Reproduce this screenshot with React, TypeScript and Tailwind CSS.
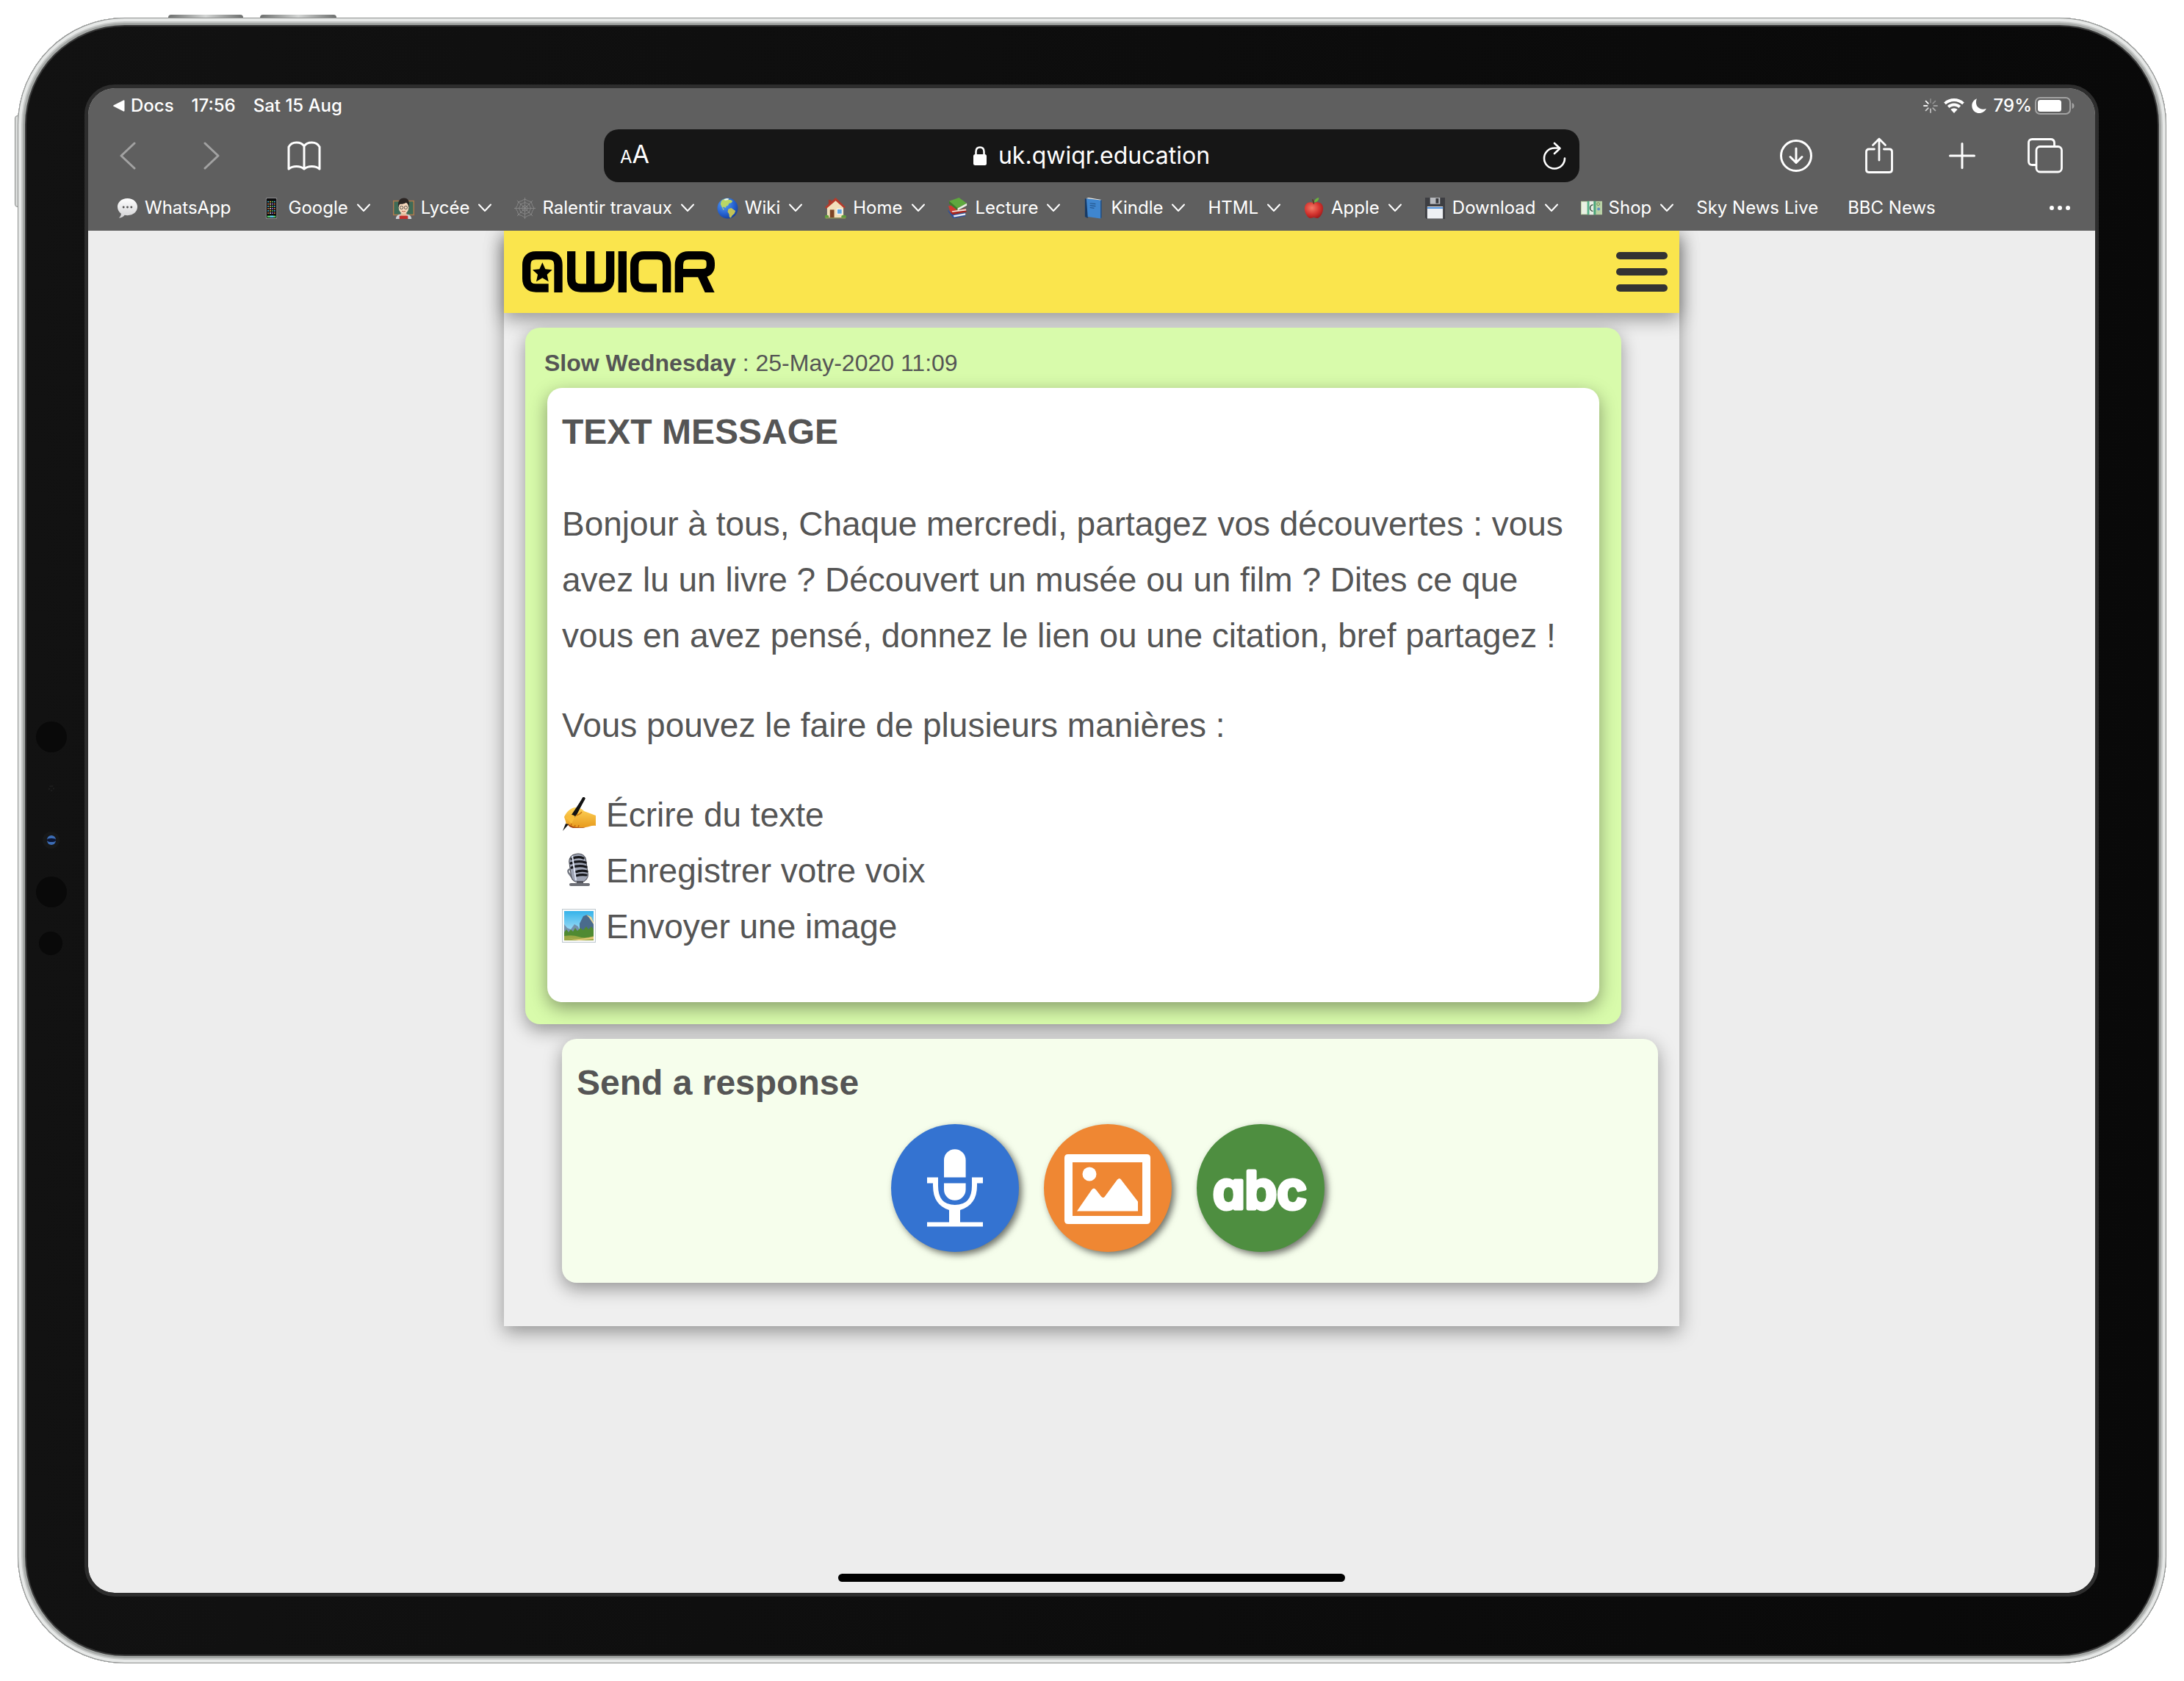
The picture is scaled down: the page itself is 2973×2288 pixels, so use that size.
import type { ReactNode } from "react";

type IconProps = { className?: string };

/* ---------- small pictures used in the bookmarks bar ---------- */

function SpeechPic() {
  return (
    <svg viewBox="0 0 30 30" className="size-[29px] shrink-0" aria-hidden="true">
      <defs>
        <linearGradient id="speech" x1="0" y1="0" x2="0" y2="1">
          <stop offset="0" stopColor="#ffffff" />
          <stop offset="1" stopColor="#d2d2d4" />
        </linearGradient>
      </defs>
      <path d="M15 1C6.500 1 1 6.500 1 13c0 4 2 7.500 5 9.600 0 2.400-1 4.400-3 6 3.500-.2 6.500-1.800 8-4 1.300.3 2.600.4 4 .4 8.500 0 14-5.500 14-12S23.500 1 15 1z" fill="url(#speech)" />
      <circle cx="9.500" cy="13.500" r="1.500" fill="#555" />
      <circle cx="15" cy="13.500" r="1.500" fill="#555" />
      <circle cx="20.500" cy="13.500" r="1.500" fill="#555" />
    </svg>
  );
}

function PhonePic() {
  const colours = ["#4fd0f0", "#b070f0", "#ffd84a", "#f08a4a", "#62d86a", "#f4f4f4"];
  return (
    <svg viewBox="0 0 30 30" className="size-[29px] shrink-0" aria-hidden="true">
      <rect x="7" y="0" width="16" height="30" rx="2" fill="#8e8e90" />
      <rect x="8" y="1" width="14" height="28" rx="1.500" fill="#0c0c0e" />
      {[0, 1, 2, 3, 4, 5].map((row) =>
        [0, 1, 2, 3].map((col) => (
          <rect key={`${row}-${col}`} x={9.5 + col * 3} y={5 + row * 3.2} width="1.800" height="1.600" fill={colours[(row * 3 + col * 2) % 6]} />
        )),
      )}
      <rect x="9" y="25.500" width="12" height="2.500" fill="#5ad36b" />
      <rect x="13" y="25.500" width="5" height="2.500" fill="#5ec6f2" />
    </svg>
  );
}

function TeacherPic() {
  return (
    <svg viewBox="0 0 30 30" className="size-[29px] shrink-0" aria-hidden="true">
      <rect x="0" y="4" width="30" height="21" fill="#b07a4c" />
      <rect x="1.500" y="5.500" width="27" height="18" fill="#3f6b57" />
      <path d="M4 30c0-5 4-7 11-7s11 2 11 7z" fill="#cfd3d8" />
      <path d="M11 21h8v5h-8z" fill="#e6bd9c" />
      <ellipse cx="15" cy="14" rx="7" ry="8.500" fill="#f6d8bd" />
      <path d="M7.500 14C6 5 10 .5 15.500.5S24 5 22.500 14c-.6-4-2-6-4-7-2.500 1.800-6 2.200-8.500 2-1.500 1-2.200 2.800-2.500 5z" fill="#2b2523" />
      <circle cx="12" cy="14" r="2.200" fill="none" stroke="#333" strokeWidth=".8" />
      <circle cx="18" cy="14" r="2.200" fill="none" stroke="#333" strokeWidth=".8" />
      <path d="M12.500 19q2.500 1.500 5 0" stroke="#b5533e" strokeWidth="1" fill="none" />
      <rect x="9" y="25.500" width="12" height="4.500" fill="#c22f2c" />
    </svg>
  );
}

function WebPic() {
  return (
    <svg viewBox="0 0 30 30" className="size-[29px] shrink-0" fill="none" stroke="#8b8b8b" strokeWidth=".9" aria-hidden="true">
      <path d="M15 0v30M0 15h30M4 4l22 22M26 4L4 26" />
      <path d="M15 2q4 3 9 4 1 5 4 9-3 4-4 9-5 1-9 4-4-3-9-4-1-5-4-9 3-4 4-9 5-1 9-4z" />
      <path d="M15 6.500q3 2 6 2.500.500 3.500 2.500 6-2 2.500-2.500 6-3.500.5-6 2.500-2.500-2-6-2.500-.5-3.500-2.500-6 2-2.500 2.500-6 3.500-.5 6-2.500z" />
      <path d="M15 11q1.500 1 3 1 .2 1.500 1 3-.8 1.500-1 3-1.500.2-3 1-1.500-.8-3-1-.2-1.500-1-3 .8-1.500 1-3 1.500 0 3-1z" />
    </svg>
  );
}

function GlobePic() {
  return (
    <svg viewBox="0 0 30 30" className="size-[29px] shrink-0" aria-hidden="true">
      <defs>
        <radialGradient id="globe" cx=".35" cy=".3" r=".8">
          <stop offset="0" stopColor="#5aa2f5" />
          <stop offset=".6" stopColor="#2460cf" />
          <stop offset="1" stopColor="#143a8e" />
        </radialGradient>
      </defs>
      <circle cx="15" cy="15" r="14.500" fill="url(#globe)" />
      <path d="M6 5C8 2.500 12 .8 15 1l2 2 2 0 3 2-2 2.500-3 .5-1.500 3-2.500 1-1 2.500-2.500-1.500-1.500 1 2 2.500-1 1L6.500 12.500 5 9z" fill="#b9d765" />
      <path d="M16 16l4-1.500 3 2 3 2-1.500 4-3 2.500-2 3.500-2-1-.5-4.500-2-3z" fill="#c3c356" />
      <path d="M10 2.300l4-1.200 3 .400-2 1.800-4 .700z" fill="#eef6ff" />
    </svg>
  );
}

function HousePic() {
  return (
    <svg viewBox="0 0 30 30" className="size-[29px] shrink-0" aria-hidden="true">
      <rect x="5" y="3" width="4" height="8" fill="#a33a2c" />
      <path d="M3 13L15 2l11 11v15H3z" fill="#f2e0bb" />
      <path d="M0 13.500L15 0l14 13.500-2 1.500L15 4.500 2 15.500z" fill="#b63a2b" />
      <rect x="7" y="17" width="6" height="11.500" fill="#7d4526" />
      <rect x="17" y="16" width="7" height="7" fill="#5fa6e0" stroke="#fff" strokeWidth="1" />
      <ellipse cx="2.500" cy="27" rx="3" ry="2.500" fill="#5d9e3a" />
      <ellipse cx="26.500" cy="27" rx="3.500" ry="2.500" fill="#5d9e3a" />
      <rect x="1" y="28" width="28" height="1.500" fill="#8d8f5a" />
    </svg>
  );
}

function BooksPic() {
  return (
    <svg viewBox="0 0 30 30" className="size-[29px] shrink-0" aria-hidden="true">
      <path d="M2 5l14-5 11 8-13 7z" fill="#5fa83e" />
      <path d="M2 5l12 10v3L2 8.500z" fill="#3d7c28" />
      <path d="M14 15l13-7v3l-13 7z" fill="#eef0e4" />
      <path d="M1 12l4-1 9 7 11-3v4l-20 4z" fill="#cf3a31" />
      <path d="M6 19l20-3v2.500L7 22z" fill="#f3e9dd" />
      <path d="M3 21l23-3 1 2-20 4z" fill="#a9261f" />
      <path d="M0 17l7 7 18-3v5L8 29 1 20z" fill="#2d4f9c" />
      <path d="M8 25l17-3v2.500L9 27.500z" fill="#e9edf5" />
    </svg>
  );
}

function BookPic() {
  return (
    <svg viewBox="0 0 30 30" className="size-[29px] shrink-0" aria-hidden="true">
      <path d="M3 1l4 2v26l-4-2z" fill="#173a66" />
      <path d="M5 1l20 2.500v26L7 27z" fill="#3f86cf" />
      <path d="M5 1l20 2.500 1.500-.5L8 0z" fill="#f1f1ee" />
      <path d="M25 3.500l1.500-.5v25l-1.500 1.500z" fill="#1f4d85" />
      <path d="M10 8l8 1M10 11l8 1M10 14l6 .8" stroke="#24578f" strokeWidth="1.200" />
    </svg>
  );
}

function ApplePic() {
  return (
    <svg viewBox="0 0 30 30" className="size-[29px] shrink-0" aria-hidden="true">
      <defs>
        <radialGradient id="apple" cx=".4" cy=".35" r=".7">
          <stop offset="0" stopColor="#f57a66" />
          <stop offset=".6" stopColor="#d3332e" />
          <stop offset="1" stopColor="#9c1a1a" />
        </radialGradient>
      </defs>
      <path d="M15 8c3-2.500 12-2.500 13 6 .6 7-4 15-8.500 15-2 0-3-1-4.500-1s-2.500 1-4.500 1C6 29 1.400 21 2 14c1-8.500 10-8.500 13-6z" fill="url(#apple)" />
      <path d="M15 9c-.3-3-.8-4.500-2-6.500" stroke="#5a3a1c" strokeWidth="1.500" fill="none" />
      <path d="M15.500 6.500C15.500 3 18.500.5 22 0c0 4-2.500 6.500-6.500 6.500z" fill="#6cb33f" />
    </svg>
  );
}

function FloppyPic() {
  return (
    <svg viewBox="0 0 30 30" className="size-[29px] shrink-0" aria-hidden="true">
      <path d="M1 0h28v30H3l-2-2z" fill="#3d3e42" />
      <rect x="8" y="0" width="14" height="9" fill="#b9bbbf" />
      <rect x="16" y="1" width="4" height="7" fill="#3a3b3e" />
      <rect x="4" y="12.500" width="22" height="17" fill="#eef0f3" />
      <rect x="4" y="13.500" width="22" height="2" fill="#4b8fdc" />
    </svg>
  );
}

function CashPic() {
  return (
    <svg viewBox="0 0 30 30" className="size-[29px] shrink-0" aria-hidden="true">
      <rect x="0" y="5" width="30" height="19" fill="#b9d2a6" />
      <rect x="1" y="6" width="8" height="17" fill="#eaf1e4" />
      <rect x="9" y="5" width="3" height="19" fill="#59b48c" />
      <rect x="12" y="5" width="6" height="19" fill="#e9efe7" />
      <rect x="18" y="5" width="3" height="19" fill="#4aa57c" />
      <path d="M17 10a4 4.500 0 1 0 0 9" stroke="#2c4a3c" strokeWidth="1.500" fill="none" />
      <circle cx="24.500" cy="9" r="2" fill="none" stroke="#6b8c54" strokeWidth="1" />
      <circle cx="25" cy="16" r="2" fill="#5d8fc4" />
    </svg>
  );
}

/* ---------- pictures inside the message ---------- */

function WritingPic() {
  return (
    <svg viewBox="0 0 46 46" className="mr-3.5 inline-block size-[46px] align-[-6px]" aria-hidden="true">
      <defs>
        <linearGradient id="hand" x1="0" y1="0" x2="0" y2="1">
          <stop offset="0" stopColor="#ffd45a" />
          <stop offset="1" stopColor="#e79a1c" />
        </linearGradient>
      </defs>
      <path d="M3 27C6 19 14 13 20 14c5 1 7 2 10 5l16 6v14c-6-1-9 2-14 2-5 1-12 1-19-1-5-2-8-3-8-7z" fill="url(#hand)" />
      <path d="M8 36c6 5 15 6 24 5l-3 1H15c-4-1-7-3-7-6z" fill="#a8480f" />
      <path d="M12 39l1-3M17 41l1-3M22 41l1-3" stroke="#c9690f" strokeWidth="1.500" />
      <path d="M28 1.500q2-2.500 3.500 0L20 24l-3 1-4-1z" fill="#131313" />
      <path d="M29.500 2L16 26" stroke="#131313" strokeWidth="4" strokeLinecap="round" />
      <path d="M5 36l4 1-8 9z" fill="#131313" />
      <path d="M5 28q7-7 13-2l-5 10z" fill="#f9bd3a" />
      <path d="M19 25q5-1 8-5" stroke="#c97a12" strokeWidth="1.500" fill="none" />
    </svg>
  );
}

function StudioMicPic() {
  return (
    <svg viewBox="0 0 46 46" className="mr-3.5 inline-block size-[46px] align-[-6px]" aria-hidden="true">
      <path d="M11 22q-4 1-2 5l6 8" stroke="#777b85" strokeWidth="2.500" fill="none" />
      <rect x="11" y="1" width="23" height="39" rx="10" transform="rotate(-8 23 20)" fill="#9fa5b5" stroke="#4b4d55" strokeWidth="1" />
      <path d="M13 8q9-4 16-1M12 14q10-4 20-1M13 20q10-4 20-1M18 26q8-3 16-1M19 31q7-2 14-1" stroke="#15161a" strokeWidth="3.200" fill="none" strokeLinecap="round" />
      <path d="M14 4l5 33" stroke="#dfe5f5" strokeWidth="2" />
      <path d="M20 38h9v4h-9z" fill="#55575f" />
      <rect x="10" y="41" width="28" height="4" rx="2" fill="#6d6f76" />
    </svg>
  );
}

function FramedPic() {
  return (
    <svg viewBox="0 0 46 46" className="mr-3.5 inline-block size-[46px] align-[-6px]" aria-hidden="true">
      <defs>
        <linearGradient id="sky" x1="0" y1="0" x2="0" y2="1">
          <stop offset="0" stopColor="#35b3ea" />
          <stop offset="1" stopColor="#d3f1fb" />
        </linearGradient>
      </defs>
      <rect x=".5" y=".5" width="45" height="45" fill="#fbfbfb" stroke="#bfc9d0" />
      <rect x="3" y="3" width="40" height="40" fill="url(#sky)" />
      <path d="M24 33V20l5-10 5-2 6 3 3 7v16z" fill="#4a6b8c" />
      <path d="M33 8l7 3 3 7v3l-6-9z" fill="#e6d9a0" />
      <path d="M3 21l4 5 5 2 5-7 5 3 4 10H3z" fill="#7391ab" />
      <path d="M3 32l3-4 3 4 3-4 3 3 3-5 3 4 4-4 4 3 4-5 3 4 4-4 3 4v12H3z" fill="#4f8a32" />
      <path d="M3 37q12-2 20 1t20-1v6H3z" fill="#9aa845" />
      <path d="M8 40q12 3 35-2v3l-20 2z" fill="#e3c978" />
    </svg>
  );
}

/* ---------- line icons ---------- */

function Chevron({ className }: IconProps) {
  return (
    <svg viewBox="0 0 18 12" className={className} fill="none" stroke="currentColor" strokeWidth="2" strokeLinecap="round" strokeLinejoin="round" aria-hidden="true">
      <path d="M1 1.500l8 8.500 8-8.500" />
    </svg>
  );
}

type Bookmark = { label: string; pic?: ReactNode; folder?: boolean };

const bookmarks: Bookmark[] = [
  { label: "WhatsApp", pic: <SpeechPic /> },
  { label: "Google", pic: <PhonePic />, folder: true },
  { label: "Lycée", pic: <TeacherPic />, folder: true },
  { label: "Ralentir travaux", pic: <WebPic />, folder: true },
  { label: "Wiki", pic: <GlobePic />, folder: true },
  { label: "Home", pic: <HousePic />, folder: true },
  { label: "Lecture", pic: <BooksPic />, folder: true },
  { label: "Kindle", pic: <BookPic />, folder: true },
  { label: "HTML", folder: true },
  { label: "Apple", pic: <ApplePic />, folder: true },
  { label: "Download", pic: <FloppyPic />, folder: true },
  { label: "Shop", pic: <CashPic />, folder: true },
  { label: "Sky News Live" },
  { label: "BBC News" },
];

function StatusBar() {
  return (
    <div className="flex h-12 items-center justify-between pr-7 pl-[34px] text-[24px] leading-6 font-medium">
      <div className="flex items-center gap-6">
        <button type="button" className="flex items-center gap-2">
          <svg viewBox="0 0 16 16" className="size-4" fill="currentColor" aria-hidden="true">
            <path d="M.7 7.200L14 .4q1.500-.6 1.500 1v13.200q0 1.600-1.500 1L.7 8.800q-1.200-.8 0-1.600z" />
          </svg>
          Docs
        </button>
        <span>17:56</span>
        <span>Sat 15 Aug</span>
      </div>
      <div className="flex items-center">
        <svg viewBox="0 0 20 20" className="mr-2 size-5" stroke="#fff" strokeWidth="1.800" strokeLinecap="round" aria-hidden="true">
          <path d="M10 1v4.500" opacity=".25" />
          <path d="M16.400 3.600l-3.200 3.200" opacity=".3" />
          <path d="M19 10h-4.500" opacity=".4" />
          <path d="M16.400 16.400l-3.200-3.200" opacity=".5" />
          <path d="M10 19v-4.500" opacity=".6" />
          <path d="M3.600 16.400l3.200-3.200" opacity=".7" />
          <path d="M1 10h4.500" opacity=".9" />
          <path d="M3.600 3.600l3.200 3.200" />
        </svg>
        <svg viewBox="0 0 28 20" className="mr-2.5 h-5 w-7" fill="#fff" aria-hidden="true">
          <path d="M14 0C8.700 0 3.800 2 .2 5.400l2.600 2.900C5.800 5.500 9.700 3.900 14 3.900s8.200 1.600 11.200 4.400l2.600-2.900C24.200 2 19.300 0 14 0z" />
          <path d="M14 6.600c-3.500 0-6.700 1.300-9.100 3.500l2.600 2.900c1.700-1.600 4-2.500 6.500-2.500s4.800.9 6.500 2.500l2.600-2.900c-2.400-2.200-5.600-3.500-9.100-3.500z" />
          <path d="M14 13.200c-1.800 0-3.400.7-4.600 1.800L14 20l4.600-5c-1.200-1.100-2.800-1.800-4.600-1.800z" />
        </svg>
        <svg viewBox="0 0 20 20" className="mr-2.5 size-5" fill="#fff" aria-hidden="true">
          <path d="M7 .2C5 5 6 9.500 9 12.300c3 2.600 7 3 10.800 1.400C18 17.600 14.500 20 10.400 20 4.800 20 .3 15.500.3 9.900.3 5.500 3 1.800 7 .2z" />
        </svg>
        <span className="mr-1">79%</span>
        <svg viewBox="0 0 54 24" className="h-6 w-[54px]" aria-hidden="true">
          <rect x="1" y="1" width="47" height="22" rx="6" fill="none" stroke="#a3a3a3" strokeWidth="2" />
          <rect x="4" y="4" width="32" height="16" rx="3.500" fill="#fff" />
          <path d="M50.500 8q3 1 3 4t-3 4z" fill="#a3a3a3" />
        </svg>
      </div>
    </div>
  );
}

function Toolbar() {
  return (
    <div className="grid h-[88px] grid-cols-[1fr_minmax(0,1328px)_1fr] items-center">
      <div className="flex items-center pl-[26px]">
        <button type="button" aria-label="Back" className="mr-[58px] grid size-14 place-items-center text-[#a2a2a2]">
          <svg viewBox="0 0 22 38" className="h-[38px] w-[22px]" fill="none" stroke="currentColor" strokeWidth="3" strokeLinecap="round" strokeLinejoin="round">
            <path d="M20 2L2 19l18 17" />
          </svg>
        </button>
        <button type="button" aria-label="Forward" className="mr-[70px] grid size-14 place-items-center text-[#a2a2a2]">
          <svg viewBox="0 0 22 38" className="h-[38px] w-[22px]" fill="none" stroke="currentColor" strokeWidth="3" strokeLinecap="round" strokeLinejoin="round">
            <path d="M2 2l18 17L2 36" />
          </svg>
        </button>
        <button type="button" aria-label="Bookmarks" className="grid size-14 place-items-center">
          <svg viewBox="0 0 46 40" className="h-10 w-[46px]" fill="none" stroke="currentColor" strokeWidth="3" strokeLinecap="round" strokeLinejoin="round">
            <path d="M23 7Q20 2 12.500 2T2 8v30q4-3.500 10.500-3.500T23 38q4-3.500 10.500-3.500T44 38V8q-3-6-10.500-6T23 7zV38" />
          </svg>
        </button>
      </div>
      <div className="flex h-[72px] items-center justify-between rounded-[20px] bg-[#161616] px-[18px]">
        <button type="button" aria-label="Page settings" className="flex w-14 items-baseline pl-1 leading-10">
          <span className="text-[24px]">A</span>
          <span className="text-[34px]">A</span>
        </button>
        <div className="flex items-center gap-4">
          <svg viewBox="0 0 18 26" className="h-[26px] w-[18px]" aria-hidden="true">
            <rect x="0" y="11" width="18" height="15" rx="2.500" fill="#fff" />
            <path d="M3.500 12V7.500q0-6 5.500-6t5.500 6V12" fill="none" stroke="#fff" strokeWidth="2.500" />
          </svg>
          <input type="text" aria-label="Address" defaultValue="uk.qwiqr.education" className="field-sizing-content bg-transparent text-[32px] leading-10 outline-none" />
        </div>
        <button type="button" aria-label="Reload" className="flex w-14 justify-end">
          <svg viewBox="0 0 32 38" className="h-[38px] w-8" fill="none" stroke="#fff" strokeWidth="2.600" strokeLinecap="round" strokeLinejoin="round">
            <path d="M30 22.500A14 14 0 1 1 16 8.500h7" />
            <path d="M16 2l7.500 7-7.500 7" />
          </svg>
        </button>
      </div>
      <div className="flex items-center justify-end gap-[57px] pr-10">
        <button type="button" aria-label="Downloads" className="grid size-14 place-items-center">
          <svg viewBox="0 0 44 44" className="size-11" fill="none" stroke="currentColor" strokeWidth="3" strokeLinecap="round" strokeLinejoin="round">
            <circle cx="22" cy="22" r="20.500" />
            <path d="M22 12v19M14 23.500l8 8 8-8" />
          </svg>
        </button>
        <button type="button" aria-label="Share" className="grid size-14 place-items-center">
          <svg viewBox="0 0 38 50" className="h-[50px] w-[38px]" fill="none" stroke="currentColor" strokeWidth="2.800" strokeLinecap="round" strokeLinejoin="round">
            <path d="M12.500 16H5q-3.500 0-3.500 3.500V44q0 3.500 3.500 3.500h28q3.500 0 3.500-3.500V19.500Q36.500 16 33 16h-7.500" />
            <path d="M19 31V2.500M10.500 10.500L19 2l8.500 8.500" />
          </svg>
        </button>
        <button type="button" aria-label="New tab" className="grid size-14 place-items-center">
          <svg viewBox="0 0 36 36" className="size-9" stroke="currentColor" strokeWidth="3" strokeLinecap="round">
            <path d="M18 1.500v33M1.500 18h33" />
          </svg>
        </button>
        <button type="button" aria-label="Tabs" className="grid size-14 place-items-center">
          <svg viewBox="0 0 48 48" className="size-12" fill="none" stroke="currentColor" strokeWidth="2.800" strokeLinejoin="round">
            <rect x="12" y="11.500" width="34.500" height="34.500" rx="5" />
            <path d="M12 36.500H6.500q-5 0-5-5V6.500q0-5 5-5h25q5 0 5 5V11" />
          </svg>
        </button>
      </div>
    </div>
  );
}

function BookmarksBar() {
  return (
    <nav aria-label="Favourites" className="flex h-[58px] items-center justify-between pr-[34px] pb-1 pl-[39px] text-[24px] leading-8">
      <ul className="flex items-center gap-[31px] whitespace-nowrap">
        {bookmarks.map((b) => (
          <li key={b.label}>
            <a href="#" className="flex items-center gap-[9px]">
              {b.pic}
              {b.label}
              {b.folder ? <Chevron className="ml-[3px] h-3 w-[18px]" /> : <span />}
            </a>
          </li>
        ))}
      </ul>
      <button type="button" aria-label="More" className="flex gap-[5px]">
        <span className="size-1.5 rounded-full bg-white" />
        <span className="size-1.5 rounded-full bg-white" />
        <span className="size-1.5 rounded-full bg-white" />
      </button>
    </nav>
  );
}

function Logo() {
  return (
    <svg viewBox="0 0 786 168" className="h-14 w-[262px]" role="img" aria-label="Qwiqr" fill="none" stroke="#000" strokeWidth="34">
      <path d="M107 150H56Q17 150 17 111V56Q17 17 56 17H108Q147 17 147 56V168" />
      <path d="M82 46l12 27 28 3-21 19 6 29-25-15-25 15 6-29-21-19 28-3z" fill="#000" stroke="none" />
      <path d="M200 0V111Q200 150 239 150H320Q359 150 359 111V0M278 0V150" />
      <path d="M409 0V168" />
      <path d="M549 150H497Q458 150 458 111V56Q458 17 497 17H551Q590 17 590 56V168" />
      <path d="M640 168V56Q640 17 679 17H733Q769 17 769 48V58Q769 89 733 89H640" />
      <path d="M714 98H752L785 168H746z" fill="#000" stroke="none" />
    </svg>
  );
}

function ResponseButtons() {
  const round = "grid size-[174px] place-items-center rounded-full shadow-[4px_4px_10px_rgba(0,0,0,0.55)]";
  return (
    <div className="mt-4 flex justify-center gap-[34px] pr-1.5">
      <button type="button" aria-label="Record audio" className={`${round} bg-[#3473d1]`}>
        <svg viewBox="0 0 174 174" className="size-full" aria-hidden="true">
          <path d="M72 72.500V49a14.800 14.800 0 0 1 29.600 0V72.500zM72 80.500h29.600V89a14.800 14.800 0 0 1-29.600 0z" fill="#fff" />
          <path d="M49 72.500h15V84q0 26 23 26t23-26V72.500h15v8h-8V84q0 26-23 33v16.500h31v6H49v-6h30V117Q57 110 57 84v-3.500h-8z" fill="#fff" />
        </svg>
      </button>
      <button type="button" aria-label="Send a picture" className={`${round} bg-[#ef8733]`}>
        <svg viewBox="0 0 174 174" className="size-full" aria-hidden="true">
          <path fillRule="evenodd" d="M33 41h107q5 0 5 5v85q0 5-5 5H33q-5 0-5-5V46q0-5 5-5zM39 52v73h95V52z" fill="#fff" />
          <circle cx="62" cy="68" r="9.500" fill="#fff" />
          <path d="M45 118.500l20-29q3-4 6 0l7 9q3 3 5 0l17-23q3-3 5 0l23 30v13z" fill="#fff" />
        </svg>
      </button>
      <button type="button" className={`${round} bg-[#4e8e40]`}>
        <svg viewBox="0 0 174 174" className="size-full">
          <text x="86" y="115" textAnchor="middle" fontFamily="Inter, sans-serif" fontSize="70" fontWeight="600" fill="#fff" stroke="#fff" strokeWidth="5" strokeLinejoin="round" style={{ fontFeatureSettings: '"cv11"' }}>
            abc
          </text>
        </svg>
      </button>
    </div>
  );
}

const cardShadow = "shadow-[0_8px_24px_rgba(0,0,0,0.38)]";

function WebPage() {
  return (
    <main className={`mx-auto w-full max-w-[1600px] bg-[#efefef] text-[#555] ${cardShadow} font-['Liberation_Sans',Arial,sans-serif]`}>
      <header className={`flex h-28 items-center justify-between bg-[#fae54d] pr-4 pl-[25px] ${cardShadow}`}>
        <a href="#" aria-label="Home page">
          <Logo />
        </a>
        <button type="button" aria-label="Menu" className="flex w-[70px] flex-col gap-3">
          <span className="h-2.5 rounded-full bg-[#333]" />
          <span className="h-2.5 rounded-full bg-[#333]" />
          <span className="h-2.5 rounded-full bg-[#333]" />
        </button>
      </header>
      <div className="px-[29px] pt-5 pb-[59px]">
        <section className={`relative mr-[50px] rounded-[20px] bg-[#d8fbab] px-[30px] pt-6 pb-[30px] ${cardShadow}`}>
          <p className="-ml-1 mb-2.5 text-[32px] leading-[48px]">
            <b>Slow Wednesday</b> : 25-May-2020 11:09
          </p>
          <article className={`rounded-[20px] bg-white px-5 pt-5 pb-[65px] text-[46px] leading-[76px] ${cardShadow}`}>
            <h2 className="text-[48px] leading-[80px] font-bold">TEXT MESSAGE</h2>
            <p className="mt-[47px]">
              Bonjour à tous, Chaque mercredi, partagez vos découvertes : vous avez lu un livre ? Découvert un musée ou un film ? Dites ce que vous en avez pensé, donnez le lien ou une citation, bref partagez !
            </p>
            <p className="mt-[46px]">Vous pouvez le faire de plusieurs manières :</p>
            <ul className="mt-[46px]">
              <li>
                <WritingPic />
                Écrire du texte
              </li>
              <li>
                <StudioMicPic />
                Enregistrer votre voix
              </li>
              <li>
                <FramedPic />
                Envoyer une image
              </li>
            </ul>
          </article>
        </section>
        <section className={`relative mt-5 ml-[50px] rounded-[20px] bg-[#f6feec] px-5 pt-5 pb-[42px] ${cardShadow}`}>
          <h2 className="text-[48px] leading-[80px] font-bold">Send a response</h2>
          <ResponseButtons />
        </section>
      </div>
    </main>
  );
}

function Bezel() {
  return (
    <>
      <span className="absolute -top-1 left-[205px] h-1.5 w-[102px] rounded-t-sm bg-linear-to-r from-[#6d6f6e] via-[#d5d7d6] to-[#6d6f6e]" />
      <span className="absolute -top-1 left-[330px] h-1.5 w-[104px] rounded-t-sm bg-linear-to-r from-[#6d6f6e] via-[#d5d7d6] to-[#6d6f6e]" />
      <span className="absolute top-[133px] -left-1 h-[125px] w-1.5 rounded-l-sm border border-[#8a8c8b] bg-[#d9dbda]" />
      <div className="absolute inset-0 rounded-[146px] bg-linear-to-r from-[#121212] to-[#090909] shadow-[inset_0_0_0_1px_#8d8f8e,inset_0_0_0_5px_#e6e8e7,inset_0_0_0_7px_#c6c8c7,inset_0_0_0_10px_#a4a7a5,inset_0_0_0_12px_#383838]" />
      <span className="absolute top-[958px] left-[25px] size-[42px] rounded-full bg-[#090909]" />
      <span className="absolute top-[1045px] left-[42px] size-2 rounded-full border-2 border-dotted border-[#1e1e1e]" />
      <span className="absolute top-[1108px] left-[34px] grid size-[23px] place-items-center rounded-full bg-[#171818]">
        <span className="h-[13px] w-3 rounded-full border-y-4 border-[#3c6cb4] bg-[#0b1430]" />
      </span>
      <span className="absolute top-[1169px] left-[25px] size-[42px] rounded-full bg-[#090909]" />
      <span className="absolute top-[1244px] left-[29px] size-8 rounded-full bg-[#090909]" />
    </>
  );
}

export default function App() {
  return (
    <div className="flex min-h-screen bg-white p-6">
      <div className="relative flex flex-1 py-24 pr-[97px] pl-24">
        <Bezel />
        <div className="relative flex flex-1 flex-col overflow-hidden rounded-[36px] bg-[#ededed] outline-[5px] outline-[#2d2d2d] font-[Inter,sans-serif]">
          <div className="relative z-10 bg-[#5f5f5f] text-white">
            <StatusBar />
            <Toolbar />
            <BookmarksBar />
          </div>
          <WebPage />
          <div className="mx-auto mt-auto mb-[15px] h-[11px] w-full max-w-[690px] rounded-full bg-black" />
        </div>
      </div>
    </div>
  );
}
